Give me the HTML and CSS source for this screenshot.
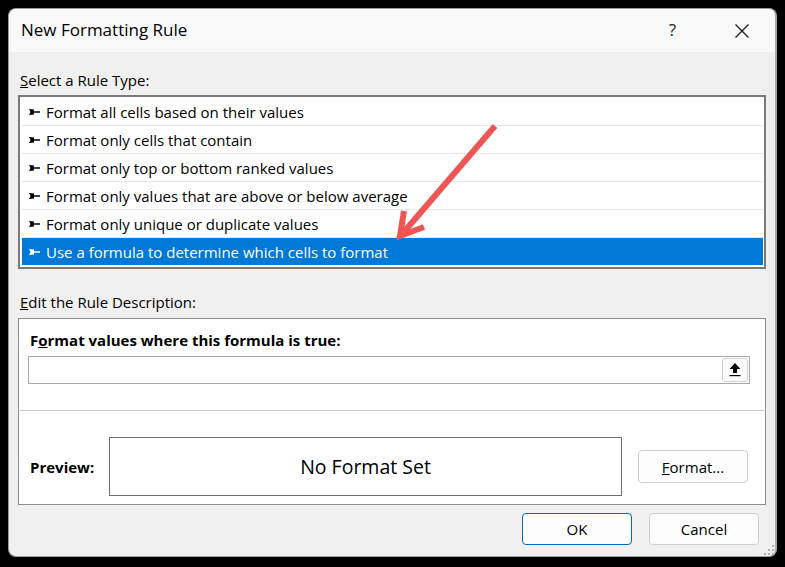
FILE: index.html
```html
<!DOCTYPE html>
<html>
<head>
<meta charset="utf-8">
<link rel="stylesheet" href="styles.css">
</head>
<body>
<div class="dialog">
  <div class="titlebar">
    <span class="title">New Formatting Rule</span>
    <span class="help">?</span>
    <svg class="close" width="14" height="14" viewBox="0 0 14 14"><path d="M0.5 0.5 L13.5 13.5 M13.5 0.5 L0.5 13.5" stroke="#1a1a1a" stroke-width="1.3" fill="none"/></svg>
  </div>
  <div class="content">
    <div class="label label-top"><u>S</u>elect a Rule Type:</div>
    <div class="list">
      <div class="row"><svg class="bullet" width="12" height="6" viewBox="0 0 12 6"><path d="M0 0 L5 0.5 L5 2.3 L11 2.3 L11 3.7 L5 3.7 L5 5.5 L0 6 L1.5 3 Z" fill="#000"/></svg>Format all cells based on their values</div>
      <div class="row"><svg class="bullet" width="12" height="6" viewBox="0 0 12 6"><path d="M0 0 L5 0.5 L5 2.3 L11 2.3 L11 3.7 L5 3.7 L5 5.5 L0 6 L1.5 3 Z" fill="#000"/></svg>Format only cells that contain</div>
      <div class="row"><svg class="bullet" width="12" height="6" viewBox="0 0 12 6"><path d="M0 0 L5 0.5 L5 2.3 L11 2.3 L11 3.7 L5 3.7 L5 5.5 L0 6 L1.5 3 Z" fill="#000"/></svg>Format only top or bottom ranked values</div>
      <div class="row"><svg class="bullet" width="12" height="6" viewBox="0 0 12 6"><path d="M0 0 L5 0.5 L5 2.3 L11 2.3 L11 3.7 L5 3.7 L5 5.5 L0 6 L1.5 3 Z" fill="#000"/></svg>Format only values that are above or below average</div>
      <div class="row"><svg class="bullet" width="12" height="6" viewBox="0 0 12 6"><path d="M0 0 L5 0.5 L5 2.3 L11 2.3 L11 3.7 L5 3.7 L5 5.5 L0 6 L1.5 3 Z" fill="#000"/></svg>Format only unique or duplicate values</div>
      <div class="row selected"><svg class="bullet" width="12" height="6" viewBox="0 0 12 6"><path d="M0 0 L5 0.5 L5 2.3 L11 2.3 L11 3.7 L5 3.7 L5 5.5 L0 6 L1.5 3 Z" fill="#fff"/></svg>Use a formula to determine which cells to format</div>
    </div>
    <div class="label label-edit"><u>E</u>dit the Rule Description:</div>
    <div class="desc">
      <div class="bold-label">F<u>o</u>rmat values where this formula is true:</div>
      <div class="input">
        <div class="ref-btn">
          <svg width="12" height="14" viewBox="0 0 12 14"><path d="M6 0 L11.5 6 L8 6 L8 10 L4 10 L4 6 L0.5 6 Z" fill="#000"/><rect x="0.5" y="12" width="11" height="1.2" fill="#000"/></svg>
        </div>
      </div>
      <div class="sep"></div>
      <div class="preview-row">
        <div class="preview-label">Preview:</div>
        <div class="preview-box">No Format Set</div>
        <div class="btn format-btn"><u>F</u>ormat...</div>
      </div>
    </div>
    <div class="buttons">
      <div class="btn ok">OK</div>
      <div class="btn cancel">Cancel</div>
    </div>
  </div>
  <svg class="grip" width="10" height="10" viewBox="0 0 10 10">
    <rect x="8" y="0" width="2" height="2" fill="#b0b0b0"/>
    <rect x="4" y="4" width="2" height="2" fill="#b0b0b0"/>
    <rect x="8" y="4" width="2" height="2" fill="#b0b0b0"/>
    <rect x="0" y="8" width="2" height="2" fill="#b0b0b0"/>
    <rect x="4" y="8" width="2" height="2" fill="#b0b0b0"/>
    <rect x="8" y="8" width="2" height="2" fill="#b0b0b0"/>
  </svg>
</div>
<svg class="arrow" width="785" height="567" viewBox="0 0 785 567">
  <g stroke="#ee5656" stroke-width="6" fill="none" stroke-linejoin="miter" stroke-linecap="butt">
    <line x1="495" y1="126" x2="403" y2="233"/>
    <polyline points="404,211 400,236 424,227"/>
  </g>
</svg>
</body>
</html>
```

FILE: styles.css
```css
html, body {
  margin: 0;
  padding: 0;
}
body {
  background: #000;
  width: 785px;
  height: 567px;
  padding: 8px;
  box-sizing: border-box;
  position: relative;
  font-family: "Open Sans", "Noto Sans", sans-serif;
  color: #000;
}
.dialog {
  position: relative;
  width: 769px;
  height: 549px;
  box-sizing: border-box;
  background: #f0f0f0;
  border: 1px solid #9c9c9c;
  border-right: 2px solid #a8a8a8;
  border-radius: 8px;
  overflow: hidden;
}
.titlebar {
  height: 43px;
  background: #f9f9f9;
  display: flex;
  align-items: center;
  padding-left: 12px;
}
.title {
  font-size: 17px;
  flex: 1;
  margin-top: -2px;
}
.help {
  font-size: 17px;
  color: #222;
  margin-right: 59px;
  margin-top: -2px;
}
.close {
  margin-right: 26px;
}
.content {
  padding: 0 9px;
}
.label {
  font-size: 15px;
  height: 20px;
  line-height: 20px;
  padding-left: 2px;
}
.label-top {
  margin-top: 18px;
}
.list {
  margin-top: 5px;
  height: 174px;
  width: 748px;
  box-sizing: border-box;
  border: 2px solid #7a7a7a;
  background: #fff;
  padding: 1px 1px 0 2px;
}
.row {
  height: 28px;
  box-sizing: border-box;
  display: flex;
  align-items: center;
  font-size: 15px;
  padding-left: 7px;
  border-bottom: 1px solid #e8e8e8;
}
.row.selected {
  background: #0078d7;
  color: #fff;
  border-bottom: none;
  height: 27px;
}
.bullet {
  margin-right: 5px;
}
.label-edit {
  margin-top: 23px;
}
.desc {
  margin-top: 6px;
  width: 748px;
  height: 187px;
  box-sizing: border-box;
  border: 1px solid #8e8e8e;
  background: #fff;
  padding: 11px 0 0 9px;
}
.bold-label {
  font-weight: bold;
  font-size: 15px;
  height: 20px;
  line-height: 20px;
  padding-left: 2px;
}
.input {
  margin-top: 6px;
  width: 722px;
  height: 28px;
  box-sizing: border-box;
  border: 1px solid #a8a8a8;
  display: flex;
  justify-content: flex-end;
  align-items: center;
  padding-right: 1px;
}
.ref-btn {
  width: 26px;
  height: 24px;
  box-sizing: border-box;
  border: 1px solid #d0d0d0;
  border-radius: 3px;
  background: #fbfbfb;
  display: flex;
  align-items: center;
  justify-content: center;
}
.sep {
  margin: 26px 0 0 -8px;
  width: 744px;
  height: 1px;
  background: #c8c8c8;
}
.preview-row {
  margin-top: 26px;
  display: flex;
  align-items: center;
}
.preview-label {
  width: 81px;
  font-weight: bold;
  font-size: 15px;
  padding-left: 2px;
  box-sizing: border-box;
}
.preview-box {
  width: 513px;
  height: 59px;
  box-sizing: border-box;
  border: 1px solid #6e6e6e;
  display: flex;
  align-items: center;
  justify-content: center;
  font-size: 19.5px;
}
.btn {
  width: 110px;
  height: 33px;
  box-sizing: border-box;
  border: 1px solid #d0d0d0;
  border-radius: 4px;
  background: #fdfdfd;
  display: flex;
  align-items: center;
  justify-content: center;
  font-size: 15px;
}
.format-btn {
  margin-left: 16px;
}
.buttons {
  margin-top: 8px;
  display: flex;
  justify-content: flex-end;
  gap: 17px;
  padding-right: 7px;
}
.btn.ok {
  border-color: #0067c0;
  height: 32px;
}
.btn.cancel {
  height: 32px;
}
.grip {
  position: absolute;
  right: 1px;
  bottom: 1px;
}
.arrow {
  position: absolute;
  left: 0;
  top: 0;
  pointer-events: none;
}
```
